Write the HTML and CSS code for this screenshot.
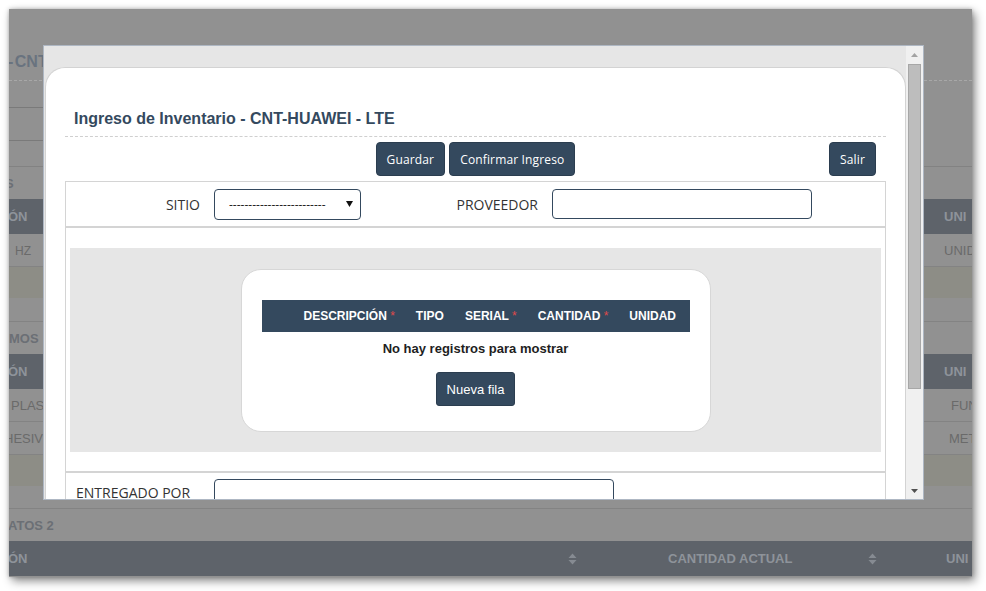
FILE: index.html
```html
<!DOCTYPE html>
<html lang="es">
<head>
<meta charset="utf-8">
<title>Ingreso de Inventario - CNT-HUAWEI - LTE</title>
<link rel="stylesheet" href="styles.css">
</head>
<body>
<div class="win">
  <div class="bg-title"><span class="bg-title-text">- CNT-HUAWEI - LTE</span></div>
  <div class="bg-inputrow"><div class="bg-input"></div></div>
  <div class="bg-section"><span class="sec sec-s">S</span></div>
  <div class="bg-head"><span class="tl"><span class="hl">ÓN</span></span><span class="tr r-944">UNI</span></div>
  <div class="bg-row"><span class="tl"><span class="t-hz">HZ</span></span><span class="tr r-944">UNID</span></div>
  <div class="bg-row olive"></div>
  <div class="bg-gap"></div>
  <div class="bg-section"><span class="sec">MOS</span></div>
  <div class="bg-head"><span class="tl"><span class="hl">ÓN</span></span><span class="tr r-944">UNI</span></div>
  <div class="bg-row"><span class="tl"><span class="t-plas">PLASTICO</span></span><span class="tr r-951">FUN</span></div>
  <div class="bg-row"><span class="tl"><span class="t-hesiv">HESIVO</span></span><span class="tr r-949">MET</span></div>
  <div class="bg-row olive"></div>
  <div class="bg-gap g2"></div>
  <div class="bg-section"><span class="sec sec-atos">ATOS 2</span></div>
  <div class="bg-head">
    <span class="h-c1"><span class="hl">ÓN</span></span>
    <svg class="sort" viewBox="0 0 9 12" width="9" height="12"><path d="M0.5 5 L4.5 0.5 L8.5 5 Z M0.5 7 L4.5 11.5 L8.5 7 Z"/></svg>
    <span class="h-c2"></span>
    <span class="h-c3">CANTIDAD ACTUAL</span>
    <svg class="sort" viewBox="0 0 9 12" width="9" height="12"><path d="M0.5 5 L4.5 0.5 L8.5 5 Z M0.5 7 L4.5 11.5 L8.5 7 Z"/></svg>
    <span class="h-c4">UNI</span>
  </div>
</div>

<div class="modal">
  <div class="modal-body">
    <div class="panel">
      <h2 class="title">Ingreso de Inventario - CNT-HUAWEI - LTE</h2>
      <div class="actions">
        <div></div>
        <div class="act-center"><button class="btn">Guardar</button><button class="btn">Confirmar Ingreso</button></div>
        <div class="act-right"><button class="btn">Salir</button></div>
      </div>
      <div class="form">
        <div class="frow r-top">
          <span class="lbl l-sitio">SITIO</span>
          <div class="select"><span class="sel-text">-------------------------</span><svg class="sel-arrow" viewBox="0 0 7 6" width="7" height="6"><path d="M0 0 H7 L3.5 6 Z"/></svg></div>
          <span class="lbl l-prov">PROVEEDOR</span>
          <div class="input i-prov"></div>
        </div>
        <div class="frow r-mid">
          <div class="graybox">
            <div class="card">
              <div class="thead">
                <span class="th">DESCRIPCIÓN <span class="req">*</span></span>
                <span class="th">TIPO</span>
                <span class="th">SERIAL <span class="req">*</span></span>
                <span class="th">CANTIDAD <span class="req">*</span></span>
                <span class="th">UNIDAD</span>
              </div>
              <p class="empty">No hay registros para mostrar</p>
              <button class="btn2">Nueva fila</button>
            </div>
          </div>
        </div>
        <div class="frow r-bot">
          <span class="lbl l-ent">ENTREGADO POR</span>
          <div class="input i-ent"></div>
        </div>
      </div>
    </div>
  </div>
  <div class="sbar">
    <div class="sb-btn"><svg viewBox="0 0 7 4" width="7" height="4" class="sb-up"><path d="M0 4 L3.5 0 L7 4 Z"/></svg></div>
    <div class="sb-thumb"></div>
    <div class="sb-space"></div>
    <div class="sb-btn"><svg viewBox="0 0 7 4" width="7" height="4" class="sb-down"><path d="M0 0 H7 L3.5 4 Z"/></svg></div>
  </div>
</div>
</body>
</html>
```

FILE: styles.css
```css
* { box-sizing: border-box; }
html, body { margin: 0; padding: 0; }
body {
  width: 986px;
  height: 591px;
  overflow: hidden;
  background: #ffffff;
  position: relative;
  font-family: "Liberation Sans", Arial, sans-serif;
}

/* ---------- dimmed page behind the dialog ---------- */
.win {
  margin: 9px 0 0 9px;
  width: 963px;
  height: 568px;
  background: #919191;
  overflow: hidden;
  box-shadow: 0 0 4px rgba(0,0,0,0.25), 3px 4px 9px rgba(0,0,0,0.45);
  white-space: nowrap;
}
.bg-title {
  height: 72px;
  padding-top: 43px;
  border-bottom: 1px dashed #a8a8a8;
  font: bold 16px/20px "Liberation Sans", Arial, sans-serif;
  color: #69737f;
}
.bg-title-text { margin-left: -1px; word-spacing: -3px; }
.bg-inputrow {
  padding: 26px 0 25px;
  border-bottom: 1px solid #828282;
}
.bg-input {
  width: 700px;
  height: 34px;
  border-top: 1px solid #7a7a7a;
  border-bottom: 1px solid #7a7a7a;
}
.bg-section {
  height: 32px;
  display: flex;
  align-items: center;
  font: bold 13px "Liberation Sans", Arial, sans-serif;
  color: #6b6f75;
}
.sec-s { margin-left: -4px; }
.sec-atos { margin-left: -1px; }
.bg-head {
  height: 35px;
  background: #5e636a;
  display: flex;
  align-items: center;
  font: bold 13px "Liberation Sans", Arial, sans-serif;
  color: #8e939a;
}
.bg-row {
  height: 33px;
  border-bottom: 1px solid #838383;
  display: flex;
  align-items: center;
  font: 13px "Liberation Sans", Arial, sans-serif;
  color: #6a6a6a;
}
.bg-row.olive { height: 31px; background: #8d8d86; border-bottom: 0; }
.bg-gap { height: 24px; border-bottom: 1px solid #838383; }
.bg-gap.g2 { height: 23px; }
.tl { flex: 1; }
.hl { margin-left: -1px; }
.t-hz { margin-left: 6px; font-size: 12px; }
.t-plas { margin-left: 2px; }
.t-hesiv { margin-left: -5px; }
.tr { flex-shrink: 0; }
.r-944 { width: 28px; }
.r-951 { width: 21px; }
.r-949 { width: 23px; }
.h-c1 { width: 559px; flex-shrink: 0; }
.h-c2 { width: 91px; flex-shrink: 0; }
.h-c3 { width: 200px; flex-shrink: 0; }
.h-c4 { margin-left: auto; width: 26px; flex-shrink: 0; }
.sort { flex-shrink: 0; fill: #868b92; }

/* ---------- dialog ---------- */
.modal {
  position: absolute;
  left: 43px;
  top: 45px;
  width: 881px;
  height: 455px;
  border: 1px solid #aeb7c3;
  background: #e6e6e6;
  display: flex;
  overflow: hidden;
}
.modal-body {
  width: 862px;
  flex-shrink: 0;
  overflow: hidden;
  padding: 21px 0 0 1px;
}
.panel {
  width: 861px;
  background: #ffffff;
  border: 1px solid #d3d3d3;
  border-bottom: 0;
  border-radius: 20px 20px 0 0;
  padding: 0 19px 40px;
}
.title {
  margin: 0;
  padding: 41px 0 7px 9px;
  font: bold 16px/20px "Liberation Sans", Arial, sans-serif;
  color: #34495e;
  border-bottom: 1px dashed #cfcfcf;
}
.actions {
  margin-top: 5px;
  display: grid;
  grid-template-columns: 1fr auto 1fr;
}
.act-center { display: flex; gap: 4px; }
.act-right { justify-self: end; margin-right: 10px; }
.btn {
  height: 34px;
  padding: 0 10px;
  background: #34495e;
  border: 1px solid #2b3d4f;
  border-radius: 4px;
  color: #ffffff;
  font: 12px "Open Sans", "Liberation Sans", sans-serif;
  letter-spacing: 0.15px;
}

.form {
  margin-top: 5px;
  border: 1px solid #d4d4d4;
  border-bottom: 0;
}
.frow { display: flex; align-items: center; }
.r-top { height: 46px; border-bottom: 2px solid #d4d4d4; }
.r-mid { display: block; padding: 20px 4px 19px; border-bottom: 2px solid #d4d4d4; }
.r-bot { padding: 6px 0 0 10px; }
.lbl {
  font: 14px "Open Sans", "Liberation Sans", sans-serif;
  color: #333333;
  text-align: right;
  flex-shrink: 0;
  margin-right: 14px;
}
.l-sitio { width: 134px; }
.l-prov { width: 177px; }
.l-ent { width: 124px; text-align: left; margin-top: -3px; }
.select {
  width: 147px;
  height: 31px;
  border: 1px solid #34495e;
  border-radius: 4px;
  display: flex;
  align-items: center;
  padding: 0 7px 0 14px;
  font: 12px "Open Sans", "Liberation Sans", sans-serif;
  color: #222222;
}
.sel-arrow { margin-left: auto; fill: #111111; }
.input {
  height: 30px;
  border: 1px solid #34495e;
  border-radius: 4px;
  background: #ffffff;
}
.i-prov { width: 260px; }
.i-ent { width: 400px; }

.graybox {
  height: 204px;
  background: #e6e6e6;
  padding-top: 21px;
}
.card {
  width: 470px;
  margin: 0 auto;
  background: #ffffff;
  border: 1px solid #d7d7d7;
  border-radius: 20px;
  padding: 30px 20px 25px;
}
.thead {
  height: 32px;
  background: #34495e;
  display: flex;
  align-items: center;
  gap: 21px;
  padding-left: 42px;
  font: bold 12px "Liberation Sans", Arial, sans-serif;
  color: #ffffff;
}
.req { color: #e0494a; font-weight: normal; }
.empty {
  margin: 8px 0 0;
  line-height: 18px;
  text-align: center;
  font: bold 13px/18px "Liberation Sans", Arial, sans-serif;
  color: #1e1e1e;
}
.btn2 {
  display: block;
  margin: 14px auto 0;
  height: 34px;
  padding: 0 10px;
  background: #34495e;
  border: 1px solid #2b3d4f;
  border-radius: 3px;
  color: #ffffff;
  font: 13px "Liberation Sans", Arial, sans-serif;
}

/* ---------- scrollbar ---------- */
.sbar {
  width: 17px;
  flex-shrink: 0;
  background: #f0f0f0;
  display: flex;
  flex-direction: column;
}
.sb-btn {
  height: 17px;
  display: flex;
  align-items: center;
  justify-content: center;
  flex-shrink: 0;
}
.sb-up { fill: #a3a3a3; }
.sb-down { fill: #505050; }
.sb-thumb {
  margin: 1px 2px 0;
  height: 325px;
  background: #bdbdbd;
  border: 1px solid #a7a7a7;
  flex-shrink: 0;
}
.sb-space { flex: 1; }
```
